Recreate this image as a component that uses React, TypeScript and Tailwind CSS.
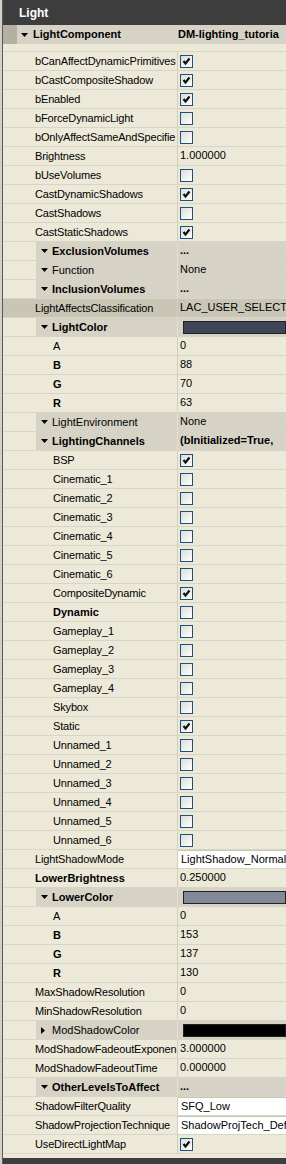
import React from 'react';

type Row = {
  label: string;
  level?: 1 | 2;
  cat?: boolean;
  open?: boolean;
  bold?: boolean;
  hl?: boolean;
  value?: string;
  valueBold?: boolean;
  check?: boolean;
  field?: string;
  swatch?: string;
};

const rows: Row[] = [
  { label: 'bCanAffectDynamicPrimitives', check: true },
  { label: 'bCastCompositeShadow', check: true },
  { label: 'bEnabled', check: true },
  { label: 'bForceDynamicLight', check: false },
  { label: 'bOnlyAffectSameAndSpecifie', check: false },
  { label: 'Brightness', value: '1.000000' },
  { label: 'bUseVolumes', check: false },
  { label: 'CastDynamicShadows', check: true },
  { label: 'CastShadows', check: false },
  { label: 'CastStaticShadows', check: true },
  { label: 'ExclusionVolumes', cat: true, open: true, bold: true, value: '...', valueBold: true },
  { label: 'Function', cat: true, open: true, value: 'None' },
  { label: 'InclusionVolumes', cat: true, open: true, bold: true, value: '...', valueBold: true },
  { label: 'LightAffectsClassification', hl: true, value: 'LAC_USER_SELECTED' },
  { label: 'LightColor', cat: true, open: true, bold: true, swatch: '#3f4658' },
  { label: 'A', level: 2, value: '0' },
  { label: 'B', level: 2, bold: true, value: '88' },
  { label: 'G', level: 2, bold: true, value: '70' },
  { label: 'R', level: 2, bold: true, value: '63' },
  { label: 'LightEnvironment', cat: true, open: true, value: 'None' },
  { label: 'LightingChannels', cat: true, open: true, bold: true, value: '(bInitialized=True,', valueBold: true },
  { label: 'BSP', level: 2, check: true },
  { label: 'Cinematic_1', level: 2, check: false },
  { label: 'Cinematic_2', level: 2, check: false },
  { label: 'Cinematic_3', level: 2, check: false },
  { label: 'Cinematic_4', level: 2, check: false },
  { label: 'Cinematic_5', level: 2, check: false },
  { label: 'Cinematic_6', level: 2, check: false },
  { label: 'CompositeDynamic', level: 2, check: true },
  { label: 'Dynamic', level: 2, bold: true, check: false },
  { label: 'Gameplay_1', level: 2, check: false },
  { label: 'Gameplay_2', level: 2, check: false },
  { label: 'Gameplay_3', level: 2, check: false },
  { label: 'Gameplay_4', level: 2, check: false },
  { label: 'Skybox', level: 2, check: false },
  { label: 'Static', level: 2, check: true },
  { label: 'Unnamed_1', level: 2, check: false },
  { label: 'Unnamed_2', level: 2, check: false },
  { label: 'Unnamed_3', level: 2, check: false },
  { label: 'Unnamed_4', level: 2, check: false },
  { label: 'Unnamed_5', level: 2, check: false },
  { label: 'Unnamed_6', level: 2, check: false },
  { label: 'LightShadowMode', field: 'LightShadow_Normal' },
  { label: 'LowerBrightness', bold: true, value: '0.250000' },
  { label: 'LowerColor', cat: true, open: true, bold: true, swatch: '#828999' },
  { label: 'A', level: 2, value: '0' },
  { label: 'B', level: 2, bold: true, value: '153' },
  { label: 'G', level: 2, bold: true, value: '137' },
  { label: 'R', level: 2, bold: true, value: '130' },
  { label: 'MaxShadowResolution', value: '0' },
  { label: 'MinShadowResolution', value: '0' },
  { label: 'ModShadowColor', cat: true, open: false, swatch: '#000000' },
  { label: 'ModShadowFadeoutExponen', value: '3.000000' },
  { label: 'ModShadowFadeoutTime', value: '0.000000' },
  { label: 'OtherLevelsToAffect', cat: true, open: true, bold: true, value: '...', valueBold: true },
  { label: 'ShadowFilterQuality', field: 'SFQ_Low' },
  { label: 'ShadowProjectionTechnique', field: 'ShadowProjTech_Defa' },
  { label: 'UseDirectLightMap', check: true },
];

const Arrow = ({ open }: { open?: boolean }) =>
  open ? (
    <svg width="7" height="4" viewBox="0 0 7 4" className="shrink-0">
      <polygon points="0,0 7,0 3.5,4" fill="#000" />
    </svg>
  ) : (
    <svg width="4" height="7" viewBox="0 0 4 7" className="shrink-0">
      <polygon points="0,0 4,3.5 0,7" fill="#000" />
    </svg>
  );

const CheckBox = ({ on }: { on?: boolean }) => (
  <div className="ml-[2px] w-[13px] h-[13px] border border-[#1c5180] bg-gradient-to-br from-[#dcdcd7] to-white flex items-center justify-center">
    {on && (
      <svg width="9" height="9" viewBox="0 0 9 9">
        <path d="M1.5 4 L3.5 6.5 L7.5 1.5" stroke="#111" strokeWidth="2.2" fill="none" />
      </svg>
    )}
  </div>
);

const Value = ({ r }: { r: Row }) => {
  if (r.check !== undefined) return <CheckBox on={r.check} />;
  if (r.swatch)
    return (
      <div className="ml-[5px] w-[130px] h-[13px] border border-[#222]" style={{ backgroundColor: r.swatch }} />
    );
  if (r.field)
    return (
      <div className="h-full w-full bg-white border-t border-[#c9c6b6] flex items-center pl-[3px] whitespace-nowrap">
        {r.field}
      </div>
    );
  return (
    <span className={r.valueBold ? 'pl-[2px] pb-[2px] font-bold whitespace-nowrap' : 'pl-[2px] pb-[2px] whitespace-nowrap'}>
      {r.value}
    </span>
  );
};

const PropRow = ({ r }: { r: Row }) => {
  if (r.cat) {
    return (
      <div className="flex h-[19px] border-b border-[#d9d5c5]">
        <div className="w-[33px] shrink-0" />
        <div className="flex flex-1 min-w-0 bg-[#d6d3c6]">
          <div className="w-[141px] shrink-0 flex items-center overflow-hidden">
            <div className="w-[16px] shrink-0 flex items-center pl-[5px]">
              <Arrow open={r.open} />
            </div>
            <span className={r.bold ? 'font-bold whitespace-nowrap' : 'whitespace-nowrap'}>{r.label}</span>
          </div>
          <div className="w-px shrink-0 bg-[#e4e1d3]" />
          <div className="flex-1 min-w-0 flex items-center overflow-hidden">
            <Value r={r} />
          </div>
        </div>
      </div>
    );
  }
  return (
    <div className={r.hl ? 'flex h-[19px] border-b border-[#d9d5c5] bg-[#c9c6b6]' : 'flex h-[19px] border-b border-[#d9d5c5]'}>
      <div
        className={
          r.level === 2
            ? 'w-[174px] shrink-0 flex items-center overflow-hidden pl-[50px]'
            : 'w-[174px] shrink-0 flex items-center overflow-hidden pl-[32px]'
        }
      >
        <span className={r.bold ? 'font-bold whitespace-nowrap' : 'whitespace-nowrap tracking-[-0.15px]'}>{r.label}</span>
      </div>
      <div className="w-px shrink-0 bg-[#d2cebe]" />
      <div className="flex-1 min-w-0 flex items-center overflow-hidden">
        <Value r={r} />
      </div>
    </div>
  );
};

export default function App() {
  return (
    <div className="w-[286px] h-[1164px] overflow-hidden bg-[#d4d0c8] pl-[2px] text-[11px] text-black font-['Liberation_Sans',Arial,sans-serif]">
      <div className="h-full flex flex-col border-l border-[#5a5a5a] bg-[#ece9d8]">
        <div className="h-[25px] shrink-0 bg-[#3d3d3d] text-white font-bold text-[12px] flex items-center pl-[16px]">
          Light
        </div>
        <div className="flex h-[19px] shrink-0">
          <div className="w-[14px] shrink-0 bg-[#b4b1a3]" />
          <div className="flex flex-1 min-w-0 bg-[#d6d3c6] items-center overflow-hidden">
            <div className="w-[160px] shrink-0 flex items-center pl-[4px]">
              <div className="w-[12px] shrink-0 flex items-center">
                <Arrow open />
              </div>
              <span className="font-bold whitespace-nowrap">LightComponent</span>
            </div>
            <span className="pl-[1px] font-bold whitespace-nowrap">DM-lighting_tutoria</span>
          </div>
        </div>
        <div className="h-[8px] shrink-0 border-b border-[#d9d5c5]" />
        {rows.map((r, i) => (
          <PropRow key={i} r={r} />
        ))}
        <div className="flex-1" />
        <div className="h-[6px] shrink-0 bg-[#3d3d3d]" />
      </div>
    </div>
  );
}
